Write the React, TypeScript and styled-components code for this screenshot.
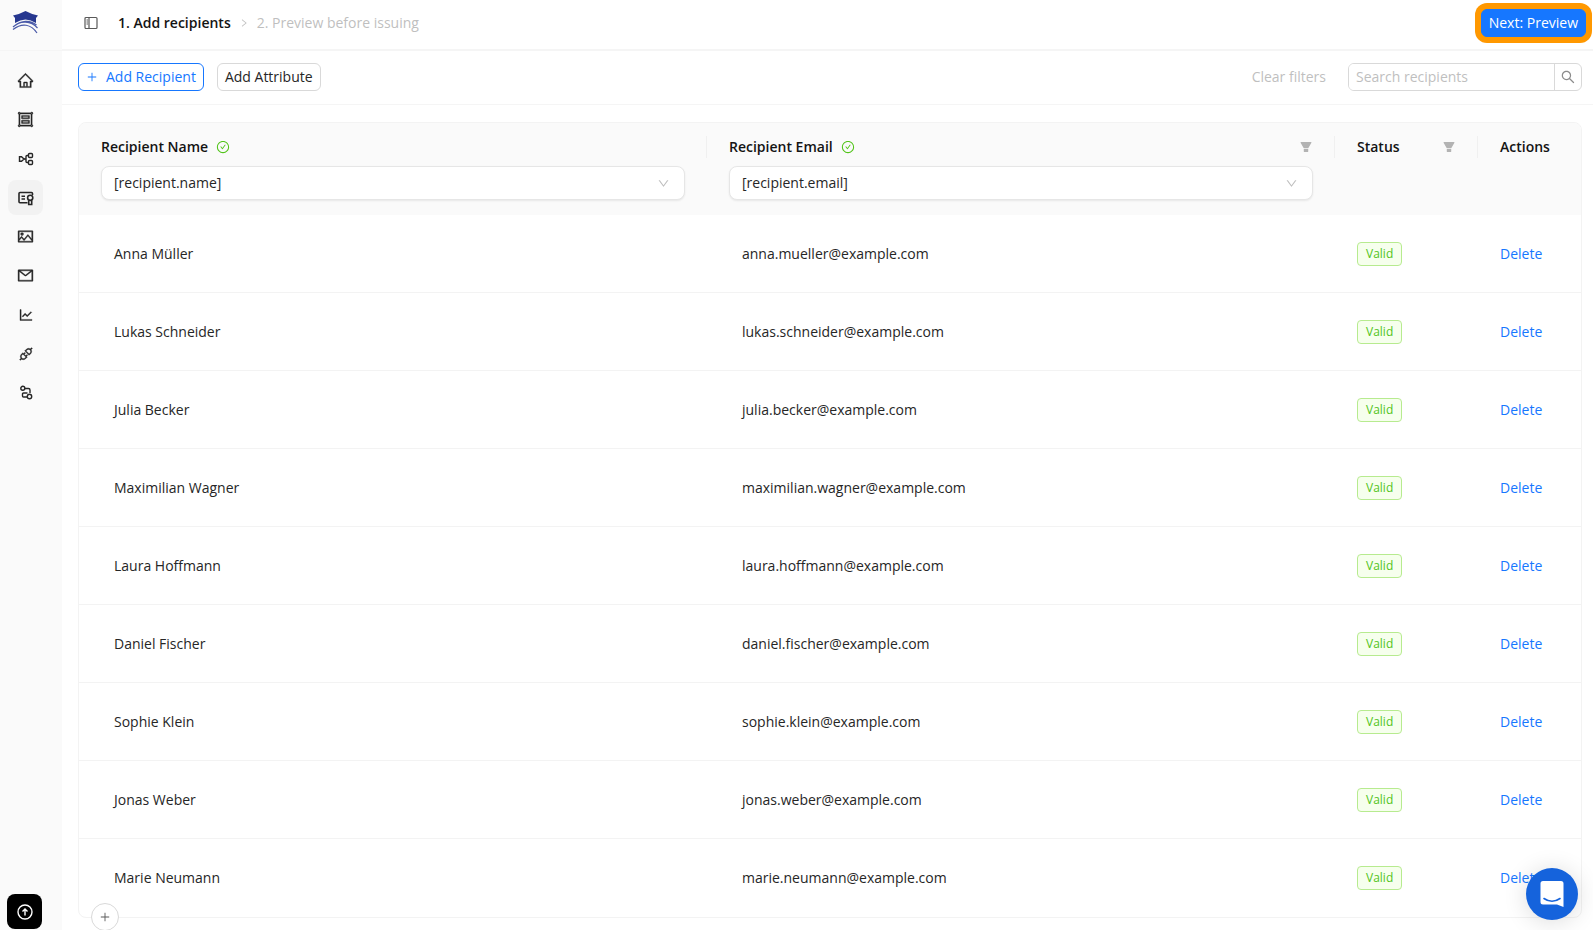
import React from 'react';
import styled, { createGlobalStyle } from 'styled-components';
import {
  AiFillFilter,
  AiOutlineApi,
  AiOutlineCheckCircle,
  AiOutlineDown,
  AiOutlineGroup,
  AiOutlineHome,
  AiOutlineLineChart,
  AiOutlineMail,
  AiOutlinePicture,
  AiOutlinePlus,
  AiOutlineRight,
  AiOutlineSearch,
} from 'react-icons/ai';

const GlobalStyle = createGlobalStyle`
  *, *::before, *::after { box-sizing: border-box; }
  body {
    margin: 0;
    background: #fff;
    color: #262626;
    font-family: 'Open Sans', 'Noto Sans', sans-serif;
    font-size: 14px;
    line-height: 22px;
  }
  button, input, select { font: inherit; color: inherit; margin: 0; }
  button { cursor: pointer; }
  svg { display: block; flex: none; }
`;

const Shell = styled.div`
  display: flex;
  height: 100vh;
  overflow: hidden;
`;

const Sidebar = styled.aside`
  display: flex;
  flex-direction: column;
  flex: none;
  width: 62px;
  background: #fafafa;
`;

const LogoLink = styled.a`
  display: flex;
  align-items: center;
  height: 51px;
  padding: 0 12px 6px;
  border-bottom: 1px solid #f5f5f5;
`;

const Nav = styled.nav`
  display: flex;
  flex-direction: column;
  gap: 4px;
  padding: 12px 8px;
`;

const NavItem = styled.a<{ $active?: boolean }>`
  display: grid;
  place-items: center;
  width: 35px;
  height: 35px;
  border-radius: 8px;
  color: #262626;
  background: ${(p) => (p.$active ? '#f2f2f2' : 'transparent')};
  svg[stroke-width='0'] { stroke-width: 24px; }
`;

const UpgradeButton = styled.button`
  display: grid;
  place-items: center;
  width: 35px;
  height: 35px;
  margin: auto 0 1px 7px;
  padding: 0;
  border: 0;
  border-radius: 8px;
  background: #000;
  color: #fff;
`;

const Main = styled.main`
  flex: 1;
  min-width: 0;
`;

const TopBar = styled.header`
  display: flex;
  align-items: center;
  justify-content: space-between;
  height: 51px;
  padding: 0 7px 4px 22px;
  border-bottom: 2px solid #f5f5f5;
`;

const Steps = styled.nav`
  display: flex;
  align-items: center;
  color: #bfbfbf;
`;

const IconButton = styled.button`
  display: grid;
  place-items: center;
  padding: 0;
  border: 0;
  background: none;
  color: #595959;
`;

const Step = styled.span<{ $current?: boolean }>`
  margin: 0 8px 0 ${(p) => (p.$current ? '20px' : '8px')};
  color: ${(p) => (p.$current ? '#141414' : '#bfbfbf')};
  font-weight: ${(p) => (p.$current ? 600 : 400)};
`;

const Button = styled.button<{ $kind?: 'primary' | 'outline' }>`
  display: inline-flex;
  align-items: center;
  gap: 8px;
  height: 28px;
  padding: 0 7px;
  border: 1px solid ${(p) => (p.$kind ? '#1677ff' : '#d9d9d9')};
  border-radius: 6px;
  background: ${(p) => (p.$kind === 'primary' ? '#1677ff' : '#fff')};
  color: ${(p) => (p.$kind === 'primary' ? '#fff' : p.$kind === 'outline' ? '#1677ff' : '#262626')};
  white-space: nowrap;
`;

const HighlightedButton = styled(Button)`
  box-shadow: 0 0 0 6px #ff9800;
`;

const Toolbar = styled.div`
  display: flex;
  align-items: center;
  justify-content: space-between;
  height: 54px;
  padding: 0 11px 2px 16px;
  border-bottom: 1px solid #f5f5f5;
`;

const ToolGroup = styled.div<{ $gap: number }>`
  display: flex;
  align-items: center;
  gap: ${(p) => p.$gap}px;
`;

const TextButton = styled.button<{ $muted?: boolean }>`
  padding: 0;
  border: 0;
  background: none;
  color: ${(p) => (p.$muted ? '#bfbfbf' : '#1677ff')};
`;

const SearchBox = styled.form`
  display: flex;
  width: 234px;
  height: 28px;
  border: 1px solid #d9d9d9;
  border-radius: 6px;
  overflow: hidden;
`;

const SearchInput = styled.input`
  flex: 1;
  min-width: 0;
  padding: 0 7px;
  border: 0;
  outline: 0;
  &::placeholder { color: #bfbfbf; opacity: 1; }
`;

const SearchButton = styled(IconButton)`
  width: 27px;
  border-left: 1px solid #d9d9d9;
  color: #8c8c8c;
`;

const TableArea = styled.section`
  position: relative;
  margin: 17px 11px 12px 16px;
`;

const Frame = styled.div`
  border: 1px solid #f3f3f3;
  border-radius: 8px;
  overflow: hidden;
`;

const Table = styled.table`
  width: 100%;
  border-collapse: separate;
  border-spacing: 0;
  table-layout: fixed;
`;

const Col = styled.col<{ $width?: number }>`
  width: ${(p) => (p.$width ? `${p.$width}px` : 'auto')};
`;

const HeadCell = styled.th`
  height: 92px;
  padding: 13px 22px 0;
  background: #fafafa;
  color: #141414;
  font-weight: 600;
  text-align: left;
  vertical-align: top;
`;

const HeadRow = styled.div`
  position: relative;
  display: flex;
  align-items: center;
  justify-content: space-between;
  margin-bottom: 8px;
  th:not(:last-child) > &::after {
    content: '';
    position: absolute;
    right: -22px;
    top: 0;
    width: 1px;
    height: 22px;
    background: #f0f0f0;
  }
`;

const HeadTitle = styled.span`
  display: flex;
  align-items: center;
  gap: 8px;
  svg { color: #52c41a; }
`;

const FilterButton = styled(IconButton)`
  color: #b3b3b3;
`;

const SelectBox = styled.div`
  position: relative;
  font-weight: 400;
  color: #bfbfbf;
  svg {
    position: absolute;
    right: 15px;
    top: 11px;
    pointer-events: none;
  }
`;

const Select = styled.select`
  display: block;
  width: 100%;
  height: 34px;
  padding: 0 12px;
  border: 1px solid #e6e6e6;
  border-radius: 8px;
  background: #fff;
  box-shadow: 0 1px 2px rgba(0, 0, 0, 0.08);
  color: #262626;
  appearance: none;
`;

const Cell = styled.td<{ $indent?: boolean }>`
  height: 78px;
  padding: 0 22px 0 ${(p) => (p.$indent ? '35px' : '22px')};
  border-bottom: 1px solid #f3f3f3;
  tr:last-child > & { border-bottom: 0; }
`;

const Tag = styled.span`
  display: inline-block;
  padding: 0 8px;
  border: 1px solid #b7eb8f;
  border-radius: 4px;
  background: #f6ffed;
  color: #52c41a;
  font-size: 12px;
`;

const AddRowButton = styled(IconButton)`
  position: absolute;
  left: 13px;
  bottom: -13px;
  width: 28px;
  height: 28px;
  border: 1px solid #d9d9d9;
  border-radius: 50%;
  background: #fff;
`;

const ChatButton = styled.button`
  position: fixed;
  right: 15px;
  bottom: 10px;
  display: grid;
  place-items: center;
  width: 52px;
  height: 52px;
  padding: 0;
  border: 0;
  border-radius: 50%;
  background: #1563dc;
  box-shadow: 0 2px 24px rgba(0, 0, 0, 0.14);
`;

const Logo = () => (
  <svg width="27" height="24" viewBox="0 0 27 24" aria-hidden="true">
    <path d="M1 5.500Q8 4 13.500 1 19 4 26 5.500L24 8v5Q13.500 6 3 13V8z" fill="#26378f" />
    <path d="M1 17C8 10 19 10.500 25.500 18M1 19.500C10 12.500 19 14 25 23M3 15.500C9 10.500 18 9.500 24.500 15" fill="none" stroke="#4a5aa8" strokeWidth="1.200" />
  </svg>
);

const line = { fill: 'none', stroke: 'currentColor', strokeWidth: 1.6 };

const SidebarIcon = () => (
  <svg width="14" height="14" viewBox="0 0 14 14" {...line} strokeWidth={1.2} aria-hidden="true">
    <rect x="1" y="1.500" width="12" height="11" rx="1" />
    <path d="M5 1.500v11M2.500 4H4M2.500 6H4M2.500 8H4" />
  </svg>
);

const WorkflowIcon = () => (
  <svg width="16" height="16" viewBox="0 0 16 16" {...line} strokeWidth={1.4} aria-hidden="true">
    <path d="M1.500 5.800h2L6 8l-2.500 2.200h-2z" />
    <rect x="10.500" y="2.500" width="4" height="4" rx="1" />
    <rect x="10.500" y="9.500" width="4" height="4" rx="1" />
    <path d="M6 8h2M10.500 4.500H9Q8 4.500 8 5.500v5q0 1 1 1h1.500" />
  </svg>
);

const CertificateIcon = () => (
  <svg width="16" height="16" viewBox="0 0 16 16" {...line} aria-hidden="true">
    <path d="M9.500 12.700H2q-1 0-1-1V3.500q0-1 1-1h11.500q1 0 1 1V5M3.500 6.300H7M3.500 9H7" />
    <circle cx="12.200" cy="7.800" r="2.600" />
    <path d="M10.700 10.300v4.200h3v-4.200" />
  </svg>
);

const PathIcon = () => (
  <svg width="14" height="16" viewBox="0 0 14 16" {...line} strokeWidth={1.4} aria-hidden="true">
    <circle cx="3.800" cy="3.300" r="2" />
    <path d="M6 3.500h3.500q1.500 0 1.500 1.500v3M8.500 8H4.500q-1 0-1 1v2q0 1 1 1H9" />
    <circle cx="10.500" cy="11.500" r="2.200" />
  </svg>
);

const UpIcon = () => (
  <svg width="16" height="16" viewBox="0 0 16 16" {...line} strokeWidth={1.4} aria-hidden="true">
    <circle cx="8" cy="8" r="7" />
    <path d="M8 11.500v-6M5.500 7.500 8 5l2.500 2.500" />
  </svg>
);

const ChatIcon = () => (
  <svg width="24" height="28" viewBox="0 0 24 28" aria-hidden="true">
    <path d="M3 1h18q2.500 0 2.500 2.500V27L17 24.500H3Q.5 24.500.5 22V3.500Q.5 1 3 1z" fill="#fff" />
    <path d="M4 18.500q8 5.500 16 0" fill="none" stroke="#1563dc" strokeWidth="1.600" strokeLinecap="round" />
  </svg>
);

const navItems = [
  { label: 'Home', icon: <AiOutlineHome size={17} /> },
  { label: 'Templates', icon: <AiOutlineGroup size={17} /> },
  { label: 'Workflows', icon: <WorkflowIcon /> },
  { label: 'Credentials', icon: <CertificateIcon />, active: true },
  { label: 'Images', icon: <AiOutlinePicture size={17} /> },
  { label: 'Emails', icon: <AiOutlineMail size={17} /> },
  { label: 'Analytics', icon: <AiOutlineLineChart size={16} /> },
  { label: 'Integrations', icon: <AiOutlineApi size={16} /> },
  { label: 'Pathways', icon: <PathIcon /> },
];

const recipients = [
  ['Anna Müller', 'anna.mueller@example.com'],
  ['Lukas Schneider', 'lukas.schneider@example.com'],
  ['Julia Becker', 'julia.becker@example.com'],
  ['Maximilian Wagner', 'maximilian.wagner@example.com'],
  ['Laura Hoffmann', 'laura.hoffmann@example.com'],
  ['Daniel Fischer', 'daniel.fischer@example.com'],
  ['Sophie Klein', 'sophie.klein@example.com'],
  ['Jonas Weber', 'jonas.weber@example.com'],
  ['Marie Neumann', 'marie.neumann@example.com'],
];

const AttributeSelect = ({ label, value }: { label: string; value: string }) => (
  <SelectBox>
    <Select aria-label={label} defaultValue={value}>
      <option value={value}>{value}</option>
    </Select>
    <AiOutlineDown size={13} />
  </SelectBox>
);

export default function App() {
  return (
    <>
      <GlobalStyle />
      <Shell>
        <Sidebar>
          <LogoLink href="#" aria-label="Dashboard"><Logo /></LogoLink>
          <Nav aria-label="Main">
            {navItems.map((item) => (
              <NavItem key={item.label} href="#" aria-label={item.label} $active={item.active}>
                {item.icon}
              </NavItem>
            ))}
          </Nav>
          <UpgradeButton aria-label="Upgrade"><UpIcon /></UpgradeButton>
        </Sidebar>
        <Main>
          <TopBar>
            <Steps aria-label="Steps">
              <IconButton aria-label="Toggle sidebar"><SidebarIcon /></IconButton>
              <Step $current>1. Add recipients</Step>
              <AiOutlineRight size={10} />
              <Step>2. Preview before issuing</Step>
            </Steps>
            <HighlightedButton $kind="primary">Next: Preview</HighlightedButton>
          </TopBar>
          <Toolbar>
            <ToolGroup $gap={13}>
              <Button $kind="outline"><AiOutlinePlus size={12} />Add Recipient</Button>
              <Button>Add Attribute</Button>
            </ToolGroup>
            <ToolGroup $gap={22}>
              <TextButton $muted>Clear filters</TextButton>
              <SearchBox role="search">
                <SearchInput aria-label="Search recipients" placeholder="Search recipients" />
                <SearchButton type="button" aria-label="Search"><AiOutlineSearch size={16} /></SearchButton>
              </SearchBox>
            </ToolGroup>
          </Toolbar>
          <TableArea>
            <Frame>
              <Table>
                <colgroup>
                  <Col />
                  <Col />
                  <Col $width={143} />
                  <Col $width={103} />
                </colgroup>
                <thead>
                  <tr>
                    <HeadCell>
                      <HeadRow><HeadTitle>Recipient Name<AiOutlineCheckCircle size={14} /></HeadTitle></HeadRow>
                      <AttributeSelect label="Recipient name attribute" value="[recipient.name]" />
                    </HeadCell>
                    <HeadCell>
                      <HeadRow>
                        <HeadTitle>Recipient Email<AiOutlineCheckCircle size={14} /></HeadTitle>
                        <FilterButton aria-label="Filter by email"><AiFillFilter size={14} /></FilterButton>
                      </HeadRow>
                      <AttributeSelect label="Recipient email attribute" value="[recipient.email]" />
                    </HeadCell>
                    <HeadCell>
                      <HeadRow>
                        Status
                        <FilterButton aria-label="Filter by status"><AiFillFilter size={14} /></FilterButton>
                      </HeadRow>
                    </HeadCell>
                    <HeadCell><HeadRow>Actions</HeadRow></HeadCell>
                  </tr>
                </thead>
                <tbody>
                  {recipients.map(([name, email]) => (
                    <tr key={email}>
                      <Cell $indent>{name}</Cell>
                      <Cell $indent>{email}</Cell>
                      <Cell><Tag>Valid</Tag></Cell>
                      <Cell><TextButton>Delete</TextButton></Cell>
                    </tr>
                  ))}
                </tbody>
              </Table>
            </Frame>
            <AddRowButton aria-label="Add row"><AiOutlinePlus size={12} /></AddRowButton>
          </TableArea>
        </Main>
      </Shell>
      <ChatButton aria-label="Open chat"><ChatIcon /></ChatButton>
    </>
  );
}
